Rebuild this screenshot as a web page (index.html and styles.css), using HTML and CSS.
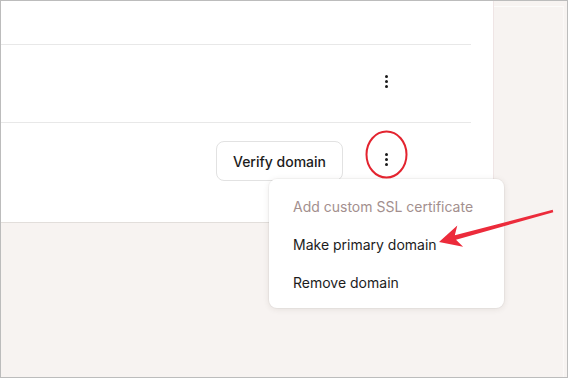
FILE: index.html
```html
<!DOCTYPE html>
<html>
<head>
<meta charset="utf-8">
<link rel="stylesheet" href="styles.css">
</head>
<body>
<div class="frame">
  <div class="card">
    <div class="row row-top"></div>
    <div class="row row-mid">
      <div class="kebab"><span></span><span></span><span></span></div>
    </div>
    <div class="row row-last">
      <button class="btn">Verify domain</button>
      <div class="kebab kebab-up"><span></span><span></span><span></span></div>
    </div>
  </div>
  <div class="side"></div>

  <div class="menu">
    <div class="item disabled">Add custom SSL certificate</div>
    <div class="item">Make primary domain</div>
    <div class="item">Remove domain</div>
  </div>

  <svg class="annot" viewBox="1 1 566 376" width="566" height="376">
    <ellipse cx="386.5" cy="154.5" rx="20" ry="23" fill="none" stroke="#e3242f" stroke-width="2"/>
    <polygon fill="#ec2b3b" points="439,242 463.1,246.8 456,239.7 553.3,212.2 552.7,209.8 454.8,235.3 457.3,225.6"/>
  </svg>
</div>
</body>
</html>
```
FILE: styles.css
```css
* { box-sizing: border-box; }
html, body { margin: 0; padding: 0; }
body {
  width: 568px;
  height: 378px;
  font-family: Inter, "Noto Sans", sans-serif;
  background: #f7f3f1;
}
.frame {
  position: relative;
  width: 568px;
  height: 378px;
  border: 1px solid #bcbcbc;
  background: #f7f3f1;
  display: flex;
  align-items: flex-start;
  overflow: hidden;
}
.card {
  width: 493px;
  height: 222px;
  background: #fff;
  border-right: 1px solid #efe5e5;
  border-bottom: 1px solid #e2dedb;
  padding-right: 22px;
  display: flex;
  flex-direction: column;
}
.row {
  display: flex;
  align-items: center;
  justify-content: flex-end;
  padding-right: 75px;
  border-bottom: 1px solid #e8e8e8;
}
.row-top { height: 44px; }
.row-mid { height: 78px; padding-bottom: 5px; }
.row-last {
  flex: 1;
  border-bottom: none;
  align-items: flex-start;
  padding-top: 18px;
  gap: 33px;
}
.kebab {
  width: 20px;
  height: 20px;
  display: flex;
  flex-direction: column;
  align-items: center;
  justify-content: center;
  gap: 2px;
}
.kebab span {
  width: 3px;
  height: 3px;
  border-radius: 50%;
  background: #1b1b1b;
}
.kebab-up { margin-top: 8px; }
.btn {
  width: 127px;
  height: 40px;
  border: 1px solid #e2e2e2;
  border-radius: 8px;
  background: #fff;
  font-family: Inter, "Noto Sans", sans-serif;
  font-size: 14px;
  font-weight: 500;
  color: #1c1c1c;
  padding: 0;
}
.side {
  flex: 1;
  height: 376px;
  margin-top: 5px;
  margin-right: 3px;
  border-top: 1px solid #fcfbfa;
  border-right: 1px solid #fbf9f8;
}
.menu {
  position: absolute;
  left: 268px;
  top: 178px;
  width: 235px;
  height: 129px;
  background: #fff;
  border-radius: 8px;
  box-shadow: 0 1px 6px rgba(60, 40, 30, 0.10), 0 0 0 1px rgba(0, 0, 0, 0.03);
  padding: 8px 0 7px;
}
.item {
  height: 38px;
  display: flex;
  align-items: center;
  padding-left: 24px;
  font-size: 14px;
  color: #1c1c1c;
}
.item.disabled { color: #a38f8e; }
.annot {
  position: absolute;
  left: 0;
  top: 0;
}
```
